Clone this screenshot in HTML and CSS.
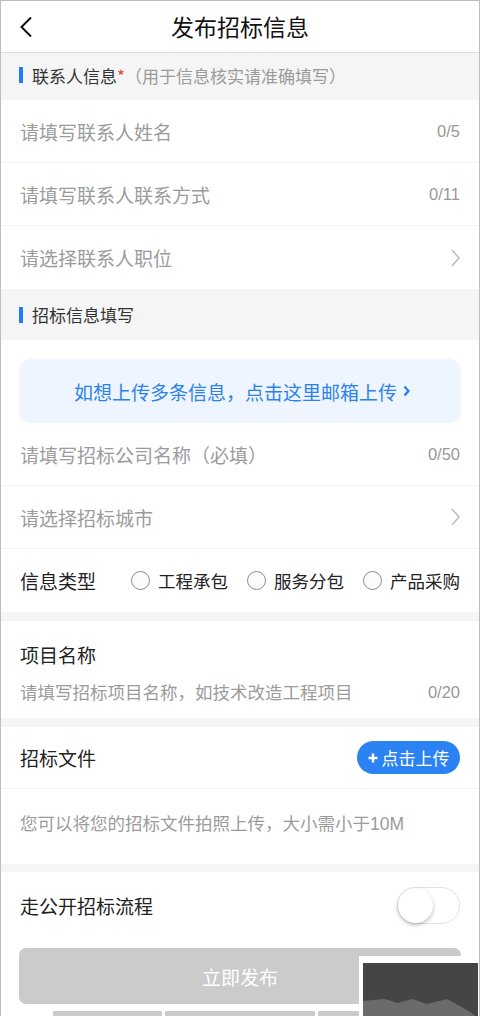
FILE: index.html
```html
<!DOCTYPE html>
<html lang="zh-CN">
<head>
    <meta charset="UTF-8">
    <meta name="viewport" content="width=device-width, initial-scale=1.0">
    <title>发布招标信息</title>
    <link rel="stylesheet" href="styles.css">
</head>
<body>
<div class="page">
    <header class="nav">
        <span class="nav-back">
            <svg width="14" height="22" viewBox="0 0 14 22"><path d="M12 1.5 L2.5 11 L12 20.5" fill="none" stroke="#111" stroke-width="2"/></svg>
        </span>
        <h1 class="nav-title">发布招标信息</h1>
        <span></span>
    </header>

    <div class="section-head section-head--contact">
        <span class="mark"></span>
        <span>联系人信息</span><span class="req">*</span><span class="hint">（用于信息核实请准确填写）</span>
    </div>
    <div class="card">
        <div class="field"><span class="ph">请填写联系人姓名</span><span class="count">0/5</span></div>
        <div class="field"><span class="ph">请填写联系人联系方式</span><span class="count">0/11</span></div>
        <div class="field">
            <span class="ph">请选择联系人职位</span>
            <svg class="arrow" width="9" height="18" viewBox="0 0 9 18"><path d="M1 1 L8 9 L1 17" fill="none" stroke="#bdbdbd" stroke-width="1.5"/></svg>
        </div>
    </div>

    <div class="section-head">
        <span class="mark"></span>
        <span>招标信息填写</span>
    </div>
    <div class="card card--top">
        <div class="banner">
            如想上传多条信息，点击这里邮箱上传
            <svg class="banner-arrow" width="7" height="12" viewBox="0 0 7 12"><path d="M1.5 1.5 L5.5 6 L1.5 10.5" fill="none" stroke="#2b82ea" stroke-width="2.4"/></svg>
        </div>
        <div class="field"><span class="ph">请填写招标公司名称（必填）</span><span class="count">0/50</span></div>
        <div class="field">
            <span class="ph">请选择招标城市</span>
            <svg class="arrow" width="9" height="18" viewBox="0 0 9 18"><path d="M1 1 L8 9 L1 17" fill="none" stroke="#bdbdbd" stroke-width="1.5"/></svg>
        </div>
        <div class="field field--types">
            <span class="label">信息类型</span>
            <div class="options">
                <span class="option"><span class="radio"></span>工程承包</span>
                <span class="option"><span class="radio"></span>服务分包</span>
                <span class="option"><span class="radio"></span>产品采购</span>
            </div>
        </div>
    </div>

    <div class="card project">
        <div class="label">项目名称</div>
        <div class="project-input"><span class="ph">请填写招标项目名称，如技术改造工程项目</span><span class="count">0/20</span></div>
    </div>

    <div class="card files">
        <div class="field field--file">
            <span class="label">招标文件</span>
            <span class="upload-btn">
                <svg width="10" height="10" viewBox="0 0 10 10"><path d="M5 0.5 V9.5 M0.5 5 H9.5" stroke="#fff" stroke-width="2.4"/></svg>
                点击上传
            </span>
        </div>
        <div class="files-desc">您可以将您的招标文件拍照上传，大小需小于<span class="num">10M</span></div>
    </div>

    <div class="card bottom">
        <div class="field field--switch">
            <span class="label">走公开招标流程</span>
            <span class="switch"><span class="switch-knob"></span></span>
        </div>
        <div class="submit">立即发布</div>
        <div class="bars"><span class="bar bar--a"></span><span class="bar bar--b"></span><span class="bar bar--c"></span></div>
    </div>

    <div class="thumb">
        <div class="thumb-inner">
            <svg width="114" height="53" viewBox="0 0 114 53"><polygon points="0,37 10,36 22,35 35,39 49,35 64,40 84,35 95,41 107,48 114,53 0,53" fill="#6b6b6b"/></svg>
        </div>
    </div>
</div>
</body>
</html>
```

FILE: styles.css
```css
body {
    margin: 0;
    background-color: #fff;
    font-family: "Noto Sans CJK SC", "Noto Sans", sans-serif;
    color: #222;
}

.page {
    width: 480px;
    height: 1016px;
    box-sizing: border-box;
    border: 1px solid #bdbdbd;
    border-bottom: none;
    background-color: #f5f5f5;
    position: relative;
    overflow: hidden;
}

/* top bar */
.nav {
    height: 51px;
    border-bottom: 1px solid #dadada;
    background-color: #fff;
    display: grid;
    grid-template-columns: 60px 1fr 60px;
    align-items: center;
}

.nav-back {
    padding-left: 18px;
    display: flex;
    align-items: center;
    padding-top: 1px;
}

.nav-title {
    margin: 0;
    text-align: center;
    font-size: 23px;
    font-weight: 400;
    color: #111;
    line-height: 1;
}

/* section titles */
.section-head {
    height: 51px;
    display: flex;
    align-items: center;
    padding-left: 18px;
    font-size: 17px;
    color: #333;
}

.section-head--contact {
    height: 47px;
    padding-bottom: 3px;
    box-sizing: border-box;
}

.mark {
    width: 4px;
    height: 16px;
    background-color: #1f7ef5;
    margin-right: 9px;
}

.req {
    color: #f04040;
}

.hint {
    color: #9a9a9a;
}

/* white blocks */
.card {
    background-color: #fff;
}

.card--top {
    padding-top: 19px;
}

.field {
    height: 63px;
    box-sizing: border-box;
    border-bottom: 1px solid #f3f3f3;
    padding: 0 19px;
    display: flex;
    align-items: center;
    justify-content: space-between;
    font-size: 19px;
}

.field:last-child {
    border-bottom: none;
}

.ph {
    color: #9b9b9b;
}

.count {
    color: #999;
    font-family: "Liberation Sans", sans-serif;
    font-size: 16.5px;
}

.num {
    font-family: "Liberation Sans", sans-serif;
}

.label {
    color: #222;
    font-size: 19px;
}

.banner {
    height: 64px;
    margin: 0 18px;
    border-radius: 12px;
    background-color: #eef5fe;
    color: #2b82ea;
    font-size: 19px;
    display: flex;
    align-items: center;
    justify-content: center;
    gap: 6px;
    padding-left: 4px;
}

.options {
    display: flex;
    gap: 19px;
}

.option {
    display: flex;
    align-items: center;
    gap: 8px;
    font-size: 17.5px;
    color: #222;
}

.radio {
    width: 19px;
    height: 19px;
    box-sizing: border-box;
    border: 1px solid #8e8e8e;
    border-radius: 50%;
    background-color: #fbfbfb;
}

/* project name */
.project {
    margin-top: 9px;
    height: 97px;
    box-sizing: border-box;
    padding: 21px 19px 0;
}

.project .label {
    line-height: 25px;
}

.project-input {
    margin-top: 13px;
    line-height: 24px;
    display: flex;
    justify-content: space-between;
    font-size: 17.5px;
}

/* files */
.files {
    margin-top: 9px;
}

.field--file {
    height: 62px;
    border-bottom: 1px solid #f3f3f3 !important;
}

.upload-btn {
    width: 103px;
    height: 33px;
    border-radius: 17px;
    background-color: #2b83f3;
    color: #fff;
    font-size: 17px;
    display: flex;
    align-items: center;
    justify-content: center;
    gap: 4px;
}

.files-desc {
    height: 75px;
    box-sizing: border-box;
    padding: 22px 19px 0;
    line-height: 24px;
    font-size: 17.5px;
    color: #9b9b9b;
}

/* bottom */
.bottom {
    margin-top: 8px;
    height: 200px;
}

.field--switch {
    height: 68px;
    padding-bottom: 2px;
    border-bottom: none;
}

.switch {
    width: 63px;
    height: 37px;
    box-sizing: border-box;
    border: 1px solid #e2e2e2;
    border-radius: 19px;
    background-color: #fff;
    display: flex;
    align-items: center;
}

.switch-knob {
    width: 35px;
    height: 35px;
    border-radius: 50%;
    background-color: #fff;
    box-shadow: 0 2px 4px rgba(0, 0, 0, 0.25);
}

.submit {
    margin: 8px 18px 0;
    height: 56px;
    border-radius: 7px;
    background-color: #cbcbcb;
    color: #fff;
    font-size: 19px;
    display: flex;
    align-items: center;
    justify-content: center;
}

.bars {
    margin-top: 7px;
    padding-left: 52px;
    display: flex;
    gap: 3px;
}

.bar {
    height: 5px;
    background-color: #cacaca;
    border-radius: 1px;
}

.bar--a { width: 109px; }
.bar--b { width: 150px; }
.bar--c { width: 100px; }

/* floating preview in the corner */
.thumb {
    position: absolute;
    left: 358px;
    top: 955px;
    width: 122px;
    height: 61px;
    box-sizing: border-box;
    background-color: #fff;
    padding: 7px 3px 0 4px;
}

.thumb-inner {
    height: 100%;
    background-color: #454545;
    display: flex;
    align-items: flex-end;
}

.thumb-inner svg {
    display: block;
}
```
